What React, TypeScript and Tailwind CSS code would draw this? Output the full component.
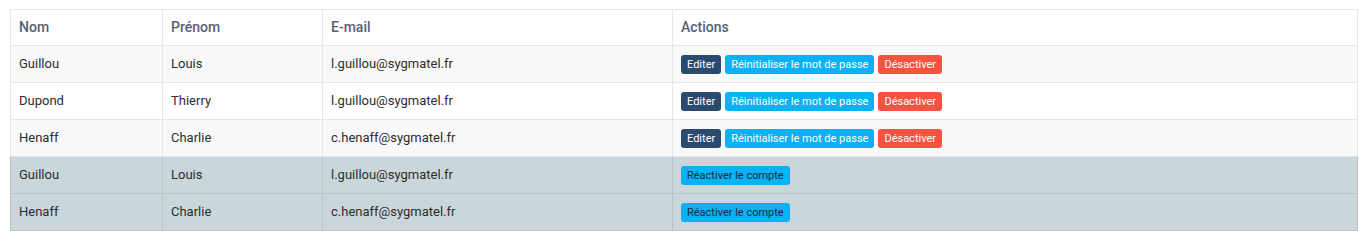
import React from "react";

type User = { nom: string; prenom: string; email: string; active: boolean };

const users: User[] = [
  { nom: "Guillou", prenom: "Louis", email: "l.guillou@sygmatel.fr", active: true },
  { nom: "Dupond", prenom: "Thierry", email: "l.guillou@sygmatel.fr", active: true },
  { nom: "Henaff", prenom: "Charlie", email: "c.henaff@sygmatel.fr", active: true },
  { nom: "Guillou", prenom: "Louis", email: "l.guillou@sygmatel.fr", active: false },
  { nom: "Henaff", prenom: "Charlie", email: "c.henaff@sygmatel.fr", active: false },
];

const btn = "inline-block h-[19px] px-[6px] rounded-[3px] text-[11px] leading-[19px] mr-[4px]";

export default function App() {
  return (
    <div className="bg-white w-[1368px] h-[248px] pt-[9px] pl-[10px] font-['Roboto',sans-serif]">
      <table className="w-[1348px] border-collapse table-fixed text-[13px] text-[#2d2d2d]">
        <colgroup>
          <col className="w-[152px]" />
          <col className="w-[160px]" />
          <col className="w-[350px]" />
          <col />
        </colgroup>
        <thead>
          <tr className="h-[36px] bg-white">
            {["Nom", "Prénom", "E-mail", "Actions"].map((h) => (
              <th
                key={h}
                className="border border-[#e6e6e6] px-[8px] text-left font-medium text-[14px] text-[#5a6074]"
              >
                {h}
              </th>
            ))}
          </tr>
        </thead>
        <tbody>
          {users.map((u, i) => {
            const bg = !u.active ? "bg-[#cbd6db]" : i % 2 === 0 ? "bg-[#f9f9f9]" : "bg-white";
            const bd = !u.active ? "border-[#b9c4c8]" : "border-[#e6e6e6]";
            return (
              <tr key={i} className={`h-[37px] ${bg}`}>
                <td className={`border ${bd} px-[8px] pb-[1px]`}>{u.nom}</td>
                <td className={`border ${bd} px-[8px] pb-[1px]`}>{u.prenom}</td>
                <td className={`border ${bd} px-[8px] pb-[1px]`}>{u.email}</td>
                <td className={`border ${bd} px-[8px] pb-[1px]`}>
                  {u.active ? (
                    <>
                      <span className={`${btn} bg-[#2b4a6f] text-white`}>Editer</span>
                      <span className={`${btn} bg-[#0ab1f4] text-white`}>Réinitialiser le mot de passe</span>
                      <span className={`${btn} bg-[#f3533f] text-white`}>Désactiver</span>
                    </>
                  ) : (
                    <span className={`${btn} bg-[#0ab1f4] text-[#1d2b36]`}>Réactiver le compte</span>
                  )}
                </td>
              </tr>
            );
          })}
        </tbody>
      </table>
    </div>
  );
}
